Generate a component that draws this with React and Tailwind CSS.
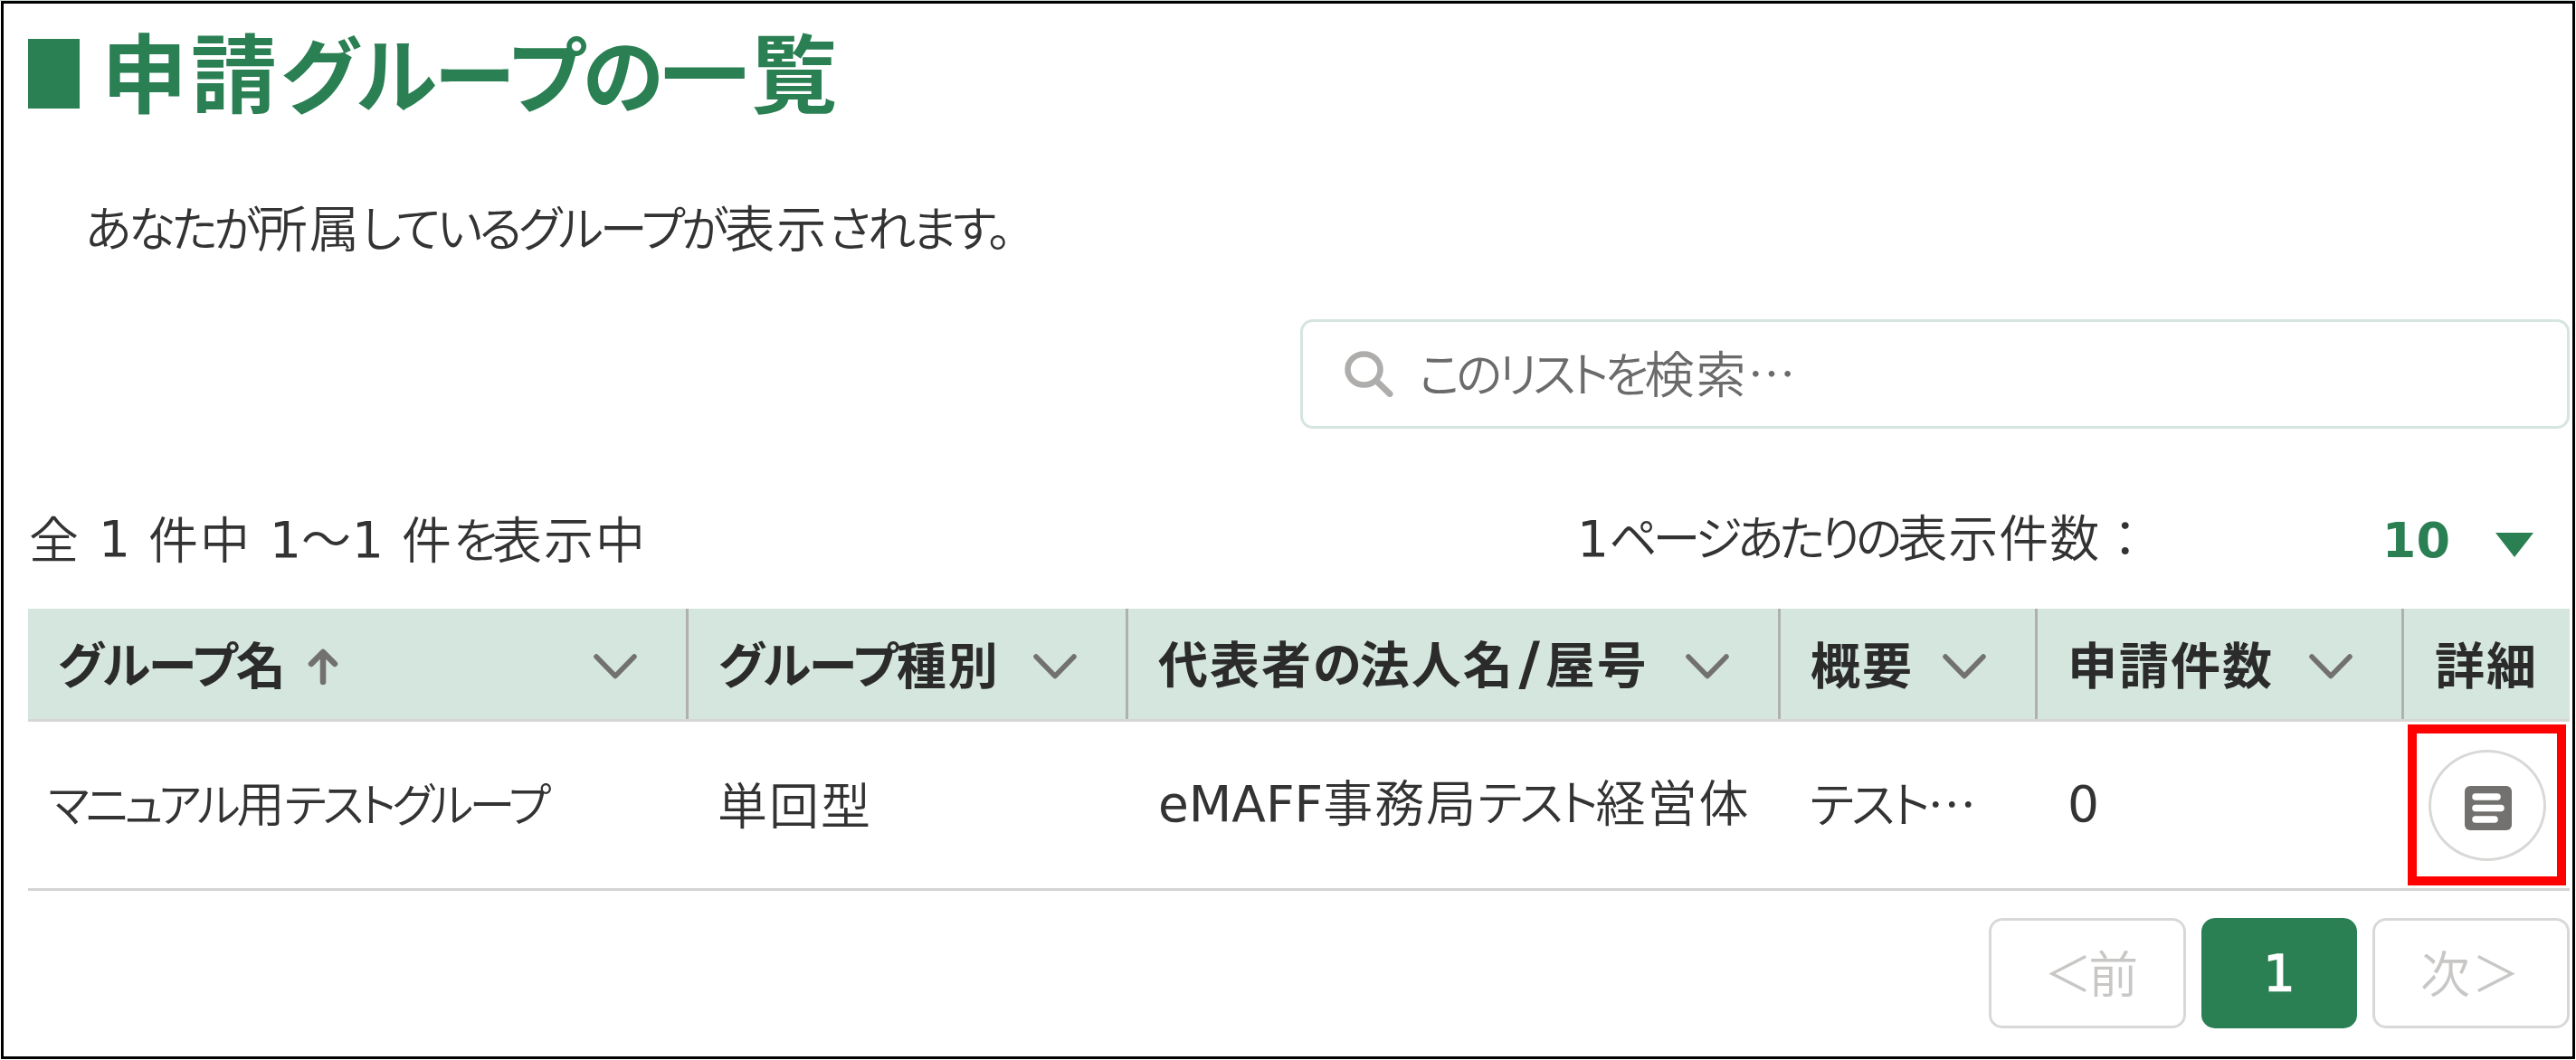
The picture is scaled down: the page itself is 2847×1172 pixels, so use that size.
import React from 'react';
import clsx from 'clsx';

const PARTS = /([一-龠]+|[!-~]+|：)/;

// Kana are set narrower than kanji, latin uses its own family
const Jp = ({ children, className = 'pb-[5px]', kanji = 'tracking-[2px]', kana = 'text-[53px] tracking-[-3.8px]', latin = 'font-normal' }) => (
  <span className={clsx('inline-flex items-baseline whitespace-pre leading-none', className)}>
    {children.split(PARTS).filter(Boolean).map((part, i) => {
      if (/^[!-~]/.test(part)) {
        return <span key={i} className={clsx("font-['DejaVu_Sans']", latin)}>{part}</span>;
      }
      if (/^[一-龠：]/.test(part)) {
        return <span key={i} className={kanji}>{part}</span>;
      }
      return <span key={i} className={clsx("[font-feature-settings:'palt']", kana)}>{part}</span>;
    })}
  </span>
);

const Chevron = () => (
  <svg width="50" height="30" viewBox="0 0 50 30" fill="none" stroke="#727170" strokeWidth="5.5" strokeLinecap="round" strokeLinejoin="round">
    <path d="M4 4 25 25.5 46 4" />
  </svg>
);

const ArrowUp = () => (
  <svg width="34" height="42" viewBox="0 0 34 42" fill="none" stroke="#727170" strokeWidth="6.5" strokeLinecap="round" strokeLinejoin="round">
    <path d="M17 38V6M4 18 17 5l13 13" />
  </svg>
);

const SearchIcon = () => (
  <svg width="54" height="51" viewBox="0 0 54 51" fill="none" stroke="#aeadab" strokeLinecap="round">
    <ellipse cx="21.5" cy="20.5" rx="18" ry="17" strokeWidth="6.5" />
    <path d="M36 34 50 47.5" strokeWidth="7" />
  </svg>
);

const DetailIcon = () => (
  <svg width="52" height="49" viewBox="0 0 52 49">
    <rect width="52" height="49" rx="6" fill="#727170" />
    <path d="M12 12H36M12 24.5H40M12 37H33" stroke="#fff" strokeWidth="7.5" strokeLinecap="round" />
  </svg>
);

const columns = [
  { label: 'グループ名', width: 'w-[730px]', pad: 'pl-[33px] pr-[53px]', sorted: true },
  { label: 'グループ種別', width: 'w-[486px]', pad: 'pl-[33px] pr-[53px]' },
  { label: '代表者の法人名/屋号', width: 'w-[721px]', pad: 'pl-[33px] pr-[53px]' },
  { label: '概要', width: 'w-[284px]', pad: 'pl-[33px] pr-[53px]' },
  { label: '申請件数', width: 'w-[405px]', pad: 'pl-[33px] pr-[53px]' },
  { label: '詳細', width: 'w-[183px]', pad: 'pl-[34px]', last: true },
];

const App = () => (
  <div className="h-[1172px] w-[2847px] border-t border-[#cfd9d1] bg-white px-px pb-px font-['Noto_Sans_CJK_JP',sans-serif] text-[55px] font-[350] text-[#333]">
    <div className="h-full border-[3px] border-black pl-[27px] pr-[3px]">
      <div className="flex h-[123px] items-end">
        <div className="mb-[7px] h-[77px] w-[57px] bg-[#2a7f53]" />
        <h1 className="ml-[24px] text-[95px] font-bold leading-none text-[#2a7f53]">
          <Jp className="pb-[3px]" kanji="tracking-[4px]" kana="text-[91px] tracking-[-2px]">申請グループの一覧</Jp>
        </h1>
      </div>

      <p className="mt-[94px] flex h-[62px] items-center pl-[63px]">
        <Jp>あなたが所属しているグループが表示されます。</Jp>
      </p>

      <div className="mt-[70px] flex justify-end">
        <div className="flex h-[121px] w-[1403px] items-center rounded-[14px] border-[3px] border-[#d4e6de] pl-[46px] text-[#6b6b6b]">
          <SearchIcon />
          <Jp className="ml-[28px] pb-[6px]" kana="text-[53px] tracking-[-4.7px]">このリストを検索…</Jp>
        </div>
      </div>

      <div className="mt-[91px] flex h-[62px] items-center justify-between">
        <div className="flex items-center gap-[20px] pl-px">
          <Jp>全</Jp>
          <Jp className="pt-px">1</Jp>
          <Jp>件中</Jp>
          <Jp className="pb-[3px]" kana="tracking-[1px]">1～1</Jp>
          <Jp kana="text-[53px] tracking-[-6px]">件を表示中</Jp>
        </div>
        <div className="flex w-[1097px] items-center">
          <Jp kanji="tracking-[1px]" kana="text-[53px] tracking-[-5px]">1ページあたりの表示件数：</Jp>
          <span className="ml-auto pt-[3px] font-['DejaVu_Sans'] text-[54px] font-bold leading-none text-[#2a7f53]">10</span>
          <svg className="ml-[50px] mr-[40px] mt-[12px]" width="42" height="27" viewBox="0 0 42 27">
            <path d="M0 0H42L21 27Z" fill="#2a7f53" />
          </svg>
        </div>
      </div>

      <div className="mt-[46px] flex h-[125px] w-[2809px] border-b-[3px] border-[#d6d6d4] bg-[#d4e6de] font-bold text-[#2b2b2b]">
        {columns.map(({ label, width, pad, sorted, last }) => (
          <div key={label} className={clsx('flex shrink-0 items-center', width, pad, !last && 'border-r-[3px] border-[#b0b0ae]')}>
            <Jp className="pb-[4px]" kana="text-[54px] tracking-[-1.5px]" latin="text-[62px] font-normal leading-[55px] pl-[6px] pr-[7px] [-webkit-text-stroke:2px_#2b2b2b]">{label}</Jp>
            {sorted && <span className="ml-[22px] mt-[6px]"><ArrowUp /></span>}
            {!last && <span className="ml-auto mt-[6px]"><Chevron /></span>}
          </div>
        ))}
      </div>

      <div className="flex h-[187px] w-[2809px] border-b-[3px] border-[#d4d4d4]">
        <div className="flex w-[730px] items-center pl-[22px]">
          <Jp className="pb-[7px]" kanji="text-[53px]" kana="text-[51px] tracking-[-4.2px]">マニュアル用テストグループ</Jp>
        </div>
        <div className="flex w-[486px] items-center pl-[32px]"><Jp className="pb-[6px]">単回型</Jp></div>
        <div className="flex w-[721px] items-center pl-[33px]">
          <Jp className="pb-[6px]" kana="text-[54px] tracking-[-3px]">eMAFF事務局テスト経営体</Jp>
        </div>
        <div className="flex w-[284px] items-center pl-[32px]"><Jp className="pb-[6px]" kana="text-[54px] tracking-[-3px]">テスト…</Jp></div>
        <div className="flex w-[405px] items-center pl-[33px]"><Jp className="pb-px">0</Jp></div>
        <div className="flex w-[183px] items-start pl-[4px] pt-[3px]">
          <div className="flex h-[178px] w-[175px] items-center justify-center border-[10px] border-[#ff0000]">
            <button className="flex h-[123px] w-[130px] items-center justify-center rounded-[50%] border-[3px] border-[#d8d8d6] pt-[7px] pl-[2px]">
              <DetailIcon />
            </button>
          </div>
        </div>
      </div>

      <div className="mt-[30px] flex w-[2809px] justify-end gap-[17px]">
        <button className="flex h-[122px] w-[218px] items-center rounded-[15px] border-[3px] border-[#d8d8d6] pl-[58px] text-[#c9c7c5]">
          <Jp className="pb-[6px]">＜前</Jp>
        </button>
        <button className="flex h-[122px] w-[172px] items-center justify-center rounded-[15px] bg-[#2a7f53] text-white">
          <Jp className="pt-px" latin="font-normal [-webkit-text-stroke:1.5px_#fff]">1</Jp>
        </button>
        <button className="flex h-[122px] w-[218px] items-center rounded-[15px] border-[3px] border-[#d8d8d6] pl-[50px] text-[#c9c7c5]">
          <Jp className="pb-[6px]">次＞</Jp>
        </button>
      </div>
    </div>
  </div>
);

export default App;
